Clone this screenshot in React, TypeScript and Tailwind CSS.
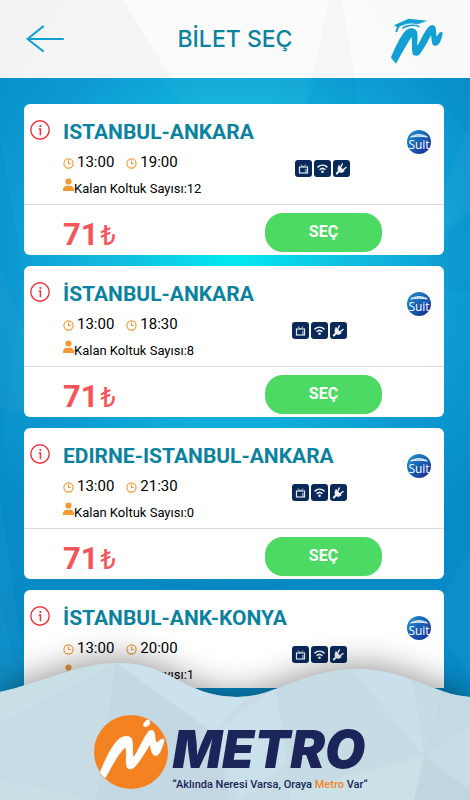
import { Clock3 } from "lucide-react";

type Trip = {
  id: number;
  route: string;
  departure: string;
  arrival: string;
  seats: number;
  price: number;
};

const trips: Trip[] = [
  { id: 1, route: "ISTANBUL-ANKARA", departure: "13:00", arrival: "19:00", seats: 12, price: 71 },
  { id: 2, route: "İSTANBUL-ANKARA", departure: "13:00", arrival: "18:30", seats: 8, price: 71 },
  { id: 3, route: "EDIRNE-ISTANBUL-ANKARA", departure: "13:00", arrival: "21:30", seats: 0, price: 71 },
  { id: 4, route: "İSTANBUL-ANK-KONYA", departure: "13:00", arrival: "20:00", seats: 1, price: 71 },
];

function BackArrow() {
  return (
    <svg viewBox="0 0 40 28" className="h-7 w-10" fill="none" stroke="#12a0d4" strokeWidth="2.200" strokeLinecap="round" strokeLinejoin="round">
      <path d="M37 14H1.500M17 1.500L1.500 14L17 26" />
    </svg>
  );
}

function StudentLogo() {
  return (
    <svg viewBox="464 52 162 144" className="h-12 w-[54px]" fill="#12a0d4">
      <path d="M467 174C480 142 501 96 518 88C529 83 544 88 546 99C548 113 545 128 546 138C558 119 570 88 584 78C592 73 600 77 601 86C603 95 602 104 604 111C608 105 611 97 617 96L622 99C621 111 614 133 606 137C600 140 593 138 591 132C588 124 589 115 587 107C577 125 563 153 552 165C546 170 535 169 532 163C528 149 531 129 529 112C514 133 496 168 482 192Z" />
      <path d="M476 77L520 57L577 63L549 73C535 68 518 68 501 76L492 82L485 98L480 97L485 82Z" />
      <path d="M500 83C514 73 538 71 554 80L551 83C535 76 520 78 502 88Z" />
      <path d="M500 77C514 70 530 68 546 73" fill="none" stroke="#12a0d4" strokeWidth="3" />
    </svg>
  );
}

function InfoIcon() {
  return (
    <svg viewBox="0 0 20 20" className="h-5 w-5" fill="none" stroke="#ef2f39">
      <circle cx="10" cy="10" r="9.200" strokeWidth="1.400" />
      <circle cx="10.400" cy="6" r="1.100" fill="#ef2f39" stroke="none" />
      <path d="M8.800 9H10.400V15.200" strokeWidth="1.500" />
    </svg>
  );
}

function PersonIcon() {
  return (
    <svg viewBox="0 0 11 14" className="h-3.5 w-[11px] shrink-0" fill="#f39a33">
      <circle cx="5.500" cy="3.500" r="3.100" />
      <path d="M0 13V11.500C0 9.300 2 8.200 3.600 7.500C4.800 8.300 6.200 8.300 7.400 7.500C9 8.200 11 9.300 11 11.500V13Z" />
    </svg>
  );
}

function Amenities() {
  return (
    <div className="flex gap-0.5">
      <svg viewBox="0 0 17 17" className="h-[17px] w-[17px] rounded-[3px] bg-[#08295a]" fill="none" stroke="#dfe6ee">
        <rect x="4.500" y="7" width="8" height="6" strokeWidth="1.200" />
        <path d="M8.500 7L5.700 4.500M8.500 7L11 4.500" strokeWidth="0.900" />
        <path d="M10.900 9V13" strokeWidth="1" />
      </svg>
      <svg viewBox="0 0 17 17" className="h-[17px] w-[17px] rounded-[3px] bg-[#08295a]" fill="none" stroke="#f1f5f9" strokeWidth="1.500">
        <path d="M3.500 7.400C6.500 4.600 10.500 4.600 13.500 7.400M5.600 9.700C7.500 8 9.500 8 11.400 9.700" />
        <circle cx="8.500" cy="11.700" r="1.300" fill="#f1f5f9" stroke="none" />
      </svg>
      <svg viewBox="0 0 17 17" className="h-[17px] w-[17px] rounded-[3px] bg-[#08295a]" fill="#f1f5f9" stroke="#f1f5f9" strokeLinecap="round">
        <path d="M6 5.800L11.300 11C9.500 12.800 7.200 12.700 6 11.500C4.700 10.300 4.500 7.500 6 5.800Z" strokeWidth="0.800" />
        <path d="M5.600 11.600L3.800 13.500" strokeWidth="2" />
        <path d="M7.800 7L9.300 4M10.500 9.500L13 7.500" strokeWidth="1.500" />
      </svg>
    </div>
  );
}

function SuitBadge() {
  return (
    <div className="absolute right-[13px] top-[26px] flex h-6 w-6 flex-col items-center overflow-hidden rounded-full bg-linear-to-br from-[#2196d3] via-[#1a5fb4] to-[#1a1f8c] text-white">
      <svg viewBox="0 0 24 8" className="h-2 w-6 shrink-0">
        <path d="M3 7.500C5 3 19 3 21 7.500C15 6.500 9 6.500 3 7.500Z" fill="#ffffff" />
        <path d="M6 5.800H18" stroke="#4a90cc" strokeWidth="0.800" strokeDasharray="1.600 1" />
      </svg>
      <span className="font-['Open_Sans',sans-serif] text-[12px] leading-[14px]">Suit</span>
    </div>
  );
}

function Time({ value }: { value: string }) {
  return (
    <span className="flex items-center gap-[3px] text-[15px] leading-5">
      <Clock3 className="mt-0.5 h-[11px] w-[11px] text-[#f39a33]" strokeWidth={2.5} />
      {value}
    </span>
  );
}

function TripCard({ trip }: { trip: Trip }) {
  return (
    <article className="relative shrink-0 rounded-md bg-white text-black">
      <div className="flex h-[101px] border-b border-[#dcdde2] pl-1.5 pt-4">
        <button type="button" aria-label="Bilgi" className="flex h-5 w-5 shrink-0">
          <InfoIcon />
        </button>
        <div className="ml-[13px] flex-1">
          <h2 className="text-[21px] font-bold leading-6 text-[#0b82a0]">{trip.route}</h2>
          <div className="flex items-center pt-2">
            <div>
              <div className="flex gap-3">
                <Time value={trip.departure} />
                <Time value={trip.arrival} />
              </div>
              <div className="flex pt-1.5 text-[13px]">
                <PersonIcon />
                <span className="leading-[22px]">Kalan Koltuk Sayısı:{trip.seats}</span>
              </div>
            </div>
            <div className="flex flex-1 justify-center pb-4">
              <Amenities />
            </div>
          </div>
        </div>
      </div>
      <SuitBadge />
      <div className="flex h-[50px] items-center justify-between pl-[39px] pr-[62px]">
        <p className="flex items-baseline gap-0.5 pt-2.5 leading-8 text-[#f5555a]">
          <span className="text-[31px] font-bold">{trip.price}</span>
          <span className="text-[28px]">₺</span>
        </p>
        <button type="button" className="mt-1 h-[39px] w-[117px] rounded-[18px] bg-[#4cd964] text-base font-bold text-white">
          SEÇ
        </button>
      </div>
    </article>
  );
}

function Backdrop() {
  return (
    <svg viewBox="0 0 470 722" preserveAspectRatio="none" className="absolute inset-0 h-full w-full" aria-hidden="true">
      <defs>
        <radialGradient id="glow" gradientUnits="userSpaceOnUse" cx="235" cy="182" r="330">
          <stop offset="0" stopColor="#02eaf0" />
          <stop offset="0.350" stopColor="#12bce0" />
          <stop offset="0.700" stopColor="#0d9ad2" />
          <stop offset="1" stopColor="#078bc7" />
        </radialGradient>
      </defs>
      <rect width="470" height="722" fill="url(#glow)" />
      <g fill="#ffffff" fillOpacity="0.030">
        <path d="M162 0L180 26H305L312 0Z" />
        <path d="M470 40L425 170L470 130ZM0 190L60 340L0 330Z" />
        <path d="M0 420L30 620H0ZM470 470L430 540L470 600Z" />
      </g>
      <g fill="#005b9f" fillOpacity="0.050">
        <path d="M315 0H355L358 26H308ZM408 0L440 26L470 60V0Z" />
        <path d="M0 60L24 200L0 380ZM470 135L430 175V213H470Z" />
        <path d="M150 500H290L240 620ZM0 520L24 500V620Z" />
      </g>
    </svg>
  );
}

function MetroMark() {
  return (
    <svg viewBox="281 167 220 220" className="h-[74px] w-[74px] shrink-0">
      <circle cx="391" cy="277" r="110" fill="#f58220" />
      <path
        d="M297 337C312 304 334 251 358 235C370 226 388 226 394 237C401 252 395 275 399 290C414 268 427 233 442 215C450 208 459 210 462 220C465 231 464 241 468 248C474 244 479 236 486 236C491 237 493 242 490 248C486 263 478 285 468 289C455 293 448 274 447 258C433 281 416 309 402 323C393 331 380 331 377 321C372 303 378 282 374 265C351 285 333 326 315 356Q304 350 297 337Z"
        fill="#ffffff"
        stroke="#e66c12"
        strokeWidth="1.500"
      />
      <path d="M433 186Q437 178 447 184Q450 193 442 200Q434 206 428 200Q425 194 433 186Z" fill="#ffffff" />
    </svg>
  );
}

function Footer() {
  return (
    <footer className="relative h-28 shrink-0">
      <svg
        viewBox="0 0 470 140"
        preserveAspectRatio="none"
        aria-hidden="true"
        className="absolute bottom-0 left-0 h-[140px] w-full drop-shadow-[0_-4px_16px_rgba(0,0,0,0.4)]"
      >
        <defs>
          <clipPath id="wave">
            <path d="M0 32C45 22 78 3 120 3C170 3 185 37 237 37C275 37 305 9 358 9C405 9 435 35 470 37V140H0Z" />
          </clipPath>
        </defs>
        <g clipPath="url(#wave)">
          <rect width="470" height="140" fill="#c7dce5" />
          <path d="M116 3L0 63V0H116Z" fill="#c9dfe6" />
          <path d="M116 3L214 73L280 0H116Z" fill="#cbe1ec" />
          <path d="M116 3L214 73L230 140H96Z" fill="#c3d8e3" />
          <path d="M214 73L276 27L290 100L240 140Z" fill="#cae0eb" />
          <path d="M276 27L290 0H352L424 96L290 130Z" fill="#c6dce4" />
          <path d="M352 8L424 96L411 0Z" fill="#c9dfea" />
          <path d="M424 96L442 30L411 15Z" fill="#c6dce5" />
          <path d="M424 96L442 30L470 20V65Z" fill="#c3d9e4" />
          <path d="M424 96L290 130V140H414Z" fill="#cae1e8" />
          <path d="M424 96L470 130V140H414Z" fill="#c0d7df" />
          <path d="M0 120L96 140H0Z" fill="#c9dfe6" />
        </g>
      </svg>
      <div className="relative flex justify-center pr-2 pt-[27px]">
        <MetroMark />
        <div className="pl-1 pt-2">
          <p className="font-['Inter',sans-serif] text-[52px] font-black italic leading-[54px] text-[#1b2559]">METRO</p>
          <p className="font-['Roboto',sans-serif] text-[11px] font-medium leading-4 text-[#1b2559]">
            “Aklında Neresi Varsa, Oraya <span className="text-[#f58220]">Metro</span> Var“
          </p>
        </div>
      </div>
    </footer>
  );
}

export default function App() {
  return (
    <div className="flex h-screen flex-col overflow-hidden bg-[#078bc7] font-['Roboto',sans-serif]">
      <header className="relative h-[78px] shrink-0 bg-[#fbfbfb]">
        <svg viewBox="0 0 470 78" preserveAspectRatio="none" className="absolute inset-0 h-full w-full" aria-hidden="true">
          <path d="M0 0H123L171 78H0Z" fill="#f5f5f5" />
          <path d="M65 0L20 78H0V0Z" fill="#f3f3f3" />
          <path d="M329 0H342L355 78H312Z" fill="#f6f6f6" />
          <path d="M363 0L423 78H470V0Z" fill="#fafafa" />
        </svg>
        <div className="relative flex h-full items-center justify-between pl-[26px] pr-[26px]">
          <button type="button" aria-label="Geri" className="flex w-[54px]">
            <BackArrow />
          </button>
          <h1 className="font-['Inter',sans-serif] text-[23px] font-medium text-[#0b82a0]">BİLET SEÇ</h1>
          <div className="pt-1">
            <StudentLogo />
          </div>
        </div>
      </header>
      <div className="relative flex min-h-0 flex-1 flex-col">
        <Backdrop />
        <main className="relative flex min-h-0 flex-1 flex-col gap-[11px] overflow-y-auto pl-6 pr-[26px] pt-[26px] [scrollbar-width:none]">
          {trips.map((trip) => (
            <TripCard key={trip.id} trip={trip} />
          ))}
        </main>
        <Footer />
      </div>
    </div>
  );
}
